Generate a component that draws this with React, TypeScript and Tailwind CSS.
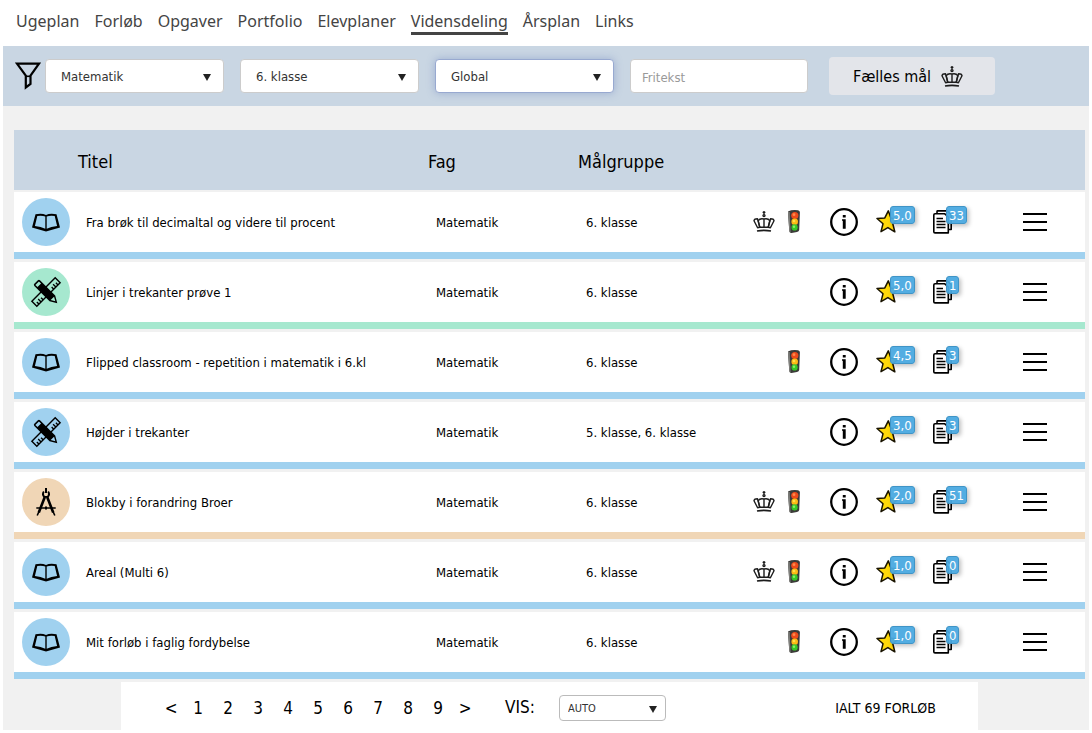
import { ReactNode } from 'react';

type Kind = 'book' | 'tools' | 'compass';
type Tone = 'blue' | 'green' | 'sand';

interface Course {
  title: string;
  subject: string;
  target: string;
  kind: Kind;
  tone: Tone;
  crown: boolean;
  light: boolean;
  rating: string;
  copies: number;
}

const courses: Course[] = [
  { title: 'Fra brøk til decimaltal og videre til procent', subject: 'Matematik', target: '6. klasse', kind: 'book', tone: 'blue', crown: true, light: true, rating: '5,0', copies: 33 },
  { title: 'Linjer i trekanter prøve 1', subject: 'Matematik', target: '6. klasse', kind: 'tools', tone: 'green', crown: false, light: false, rating: '5,0', copies: 1 },
  { title: 'Flipped classroom - repetition i matematik i 6.kl', subject: 'Matematik', target: '6. klasse', kind: 'book', tone: 'blue', crown: false, light: true, rating: '4,5', copies: 3 },
  { title: 'Højder i trekanter', subject: 'Matematik', target: '5. klasse, 6. klasse', kind: 'tools', tone: 'blue', crown: false, light: false, rating: '3,0', copies: 3 },
  { title: 'Blokby i forandring Broer', subject: 'Matematik', target: '6. klasse', kind: 'compass', tone: 'sand', crown: true, light: true, rating: '2,0', copies: 51 },
  { title: 'Areal (Multi 6)', subject: 'Matematik', target: '6. klasse', kind: 'book', tone: 'blue', crown: true, light: true, rating: '1,0', copies: 0 },
  { title: 'Mit forløb i faglig fordybelse', subject: 'Matematik', target: '6. klasse', kind: 'book', tone: 'blue', crown: false, light: true, rating: '1,0', copies: 0 },
];

const navItems = ['Ugeplan', 'Forløb', 'Opgaver', 'Portfolio', 'Elevplaner', 'Vidensdeling', 'Årsplan', 'Links'];

const discTone: Record<Tone, string> = {
  blue: 'bg-[#a0d1ef]',
  green: 'bg-[#a6e8cf]',
  sand: 'bg-[#f0d6b6]',
};

const lineTone: Record<Tone, string> = {
  blue: 'border-b-[#a0d1ef]',
  green: 'border-b-[#a6e8cf]',
  sand: 'border-b-[#f0d6b6]',
};

function FunnelIcon() {
  return (
    <svg viewBox="0 0 26 28" className="h-7 w-[26px] shrink-0" fill="none" stroke="#000" strokeWidth="2.2" aria-hidden="true">
      <path d="M2 1.600H24L15.500 13.500V22L10.800 25.500V13.500Z" />
      <path d="M10.800 14.300H15.500" strokeWidth="1.600" />
    </svg>
  );
}

function CrownIcon() {
  return (
    <svg viewBox="0 0 22 24" className="h-6 w-[22px]" fill="none" stroke="#1c1c1c" strokeWidth="1.4" strokeLinejoin="round" aria-hidden="true">
      <path d="M11 1V4.500M9.600 2.400H12.400" />
      <circle cx="11" cy="5.600" r="1" />
      <path d="M4.600 17.700L1 10.700Q1.300 8.800 4.500 8.800L6.800 17.300Z" />
      <path d="M17.400 17.700L21 10.700Q20.700 8.800 17.500 8.800L15.200 17.300Z" />
      <path d="M5.200 10.600Q7 8 11 9Q15 8 16.800 10.600L15.200 17.300H6.800ZM11 9V17" />
      <path d="M4 21Q11 19.600 18 21" strokeWidth="1.700" />
    </svg>
  );
}

function TrafficLightIcon() {
  return (
    <svg viewBox="0 0 14 24" className="h-6 w-[14px]" aria-hidden="true">
      <path d="M1 1.500Q5 -.5 11 .3Q13 .6 12.900 2.500L12.200 20Q12 21.500 10 21.900L4.500 22.900Q2.500 23 2.300 21L1 3Z" fill="#3b3a38" />
      <path d="M1 2L2.300 21.500L3.600 22.600L2.700 2Z" fill="#80807c" />
      <circle cx="7.800" cy="5.500" r="3.600" fill="#ee4a1a" />
      <circle cx="7.700" cy="11.700" r="3.300" fill="#fdb813" />
      <circle cx="7.600" cy="17.400" r="3.100" fill="#35c828" />
      <circle cx="7" cy="4.700" r="1.400" fill="#ff8a4c" />
      <circle cx="7" cy="11" r="1.300" fill="#ffe04a" />
      <circle cx="7" cy="16.800" r="1.200" fill="#8dec6a" />
    </svg>
  );
}

function InfoIcon() {
  return (
    <svg viewBox="0 0 28 28" className="h-7 w-7" aria-hidden="true">
      <circle cx="14" cy="14" r="12.800" fill="none" stroke="#000" strokeWidth="2.300" />
      <path d="M12.800 7H15.700V9.500H12.800ZM12 11.300H15.700V20.700H12.800V12.800H12Z" fill="#000" />
    </svg>
  );
}

function StarIcon() {
  return (
    <svg viewBox="0 0 24 24" className="h-6 w-6" aria-hidden="true">
      <path d="M12.300 .8L15 8.200L22.800 8.500L16.800 13.800L18.800 21.800L11.900 17.600L5 21.600L7 13.800L1 8.500L8.800 7.900Z" fill="#ffd90a" stroke="#1a1400" strokeWidth="1.500" strokeLinejoin="round" />
    </svg>
  );
}

function DocsIcon() {
  return (
    <svg viewBox="0 0 22 24" className="h-6 w-[22px]" fill="#fff" stroke="#000" strokeWidth="1.600" strokeLinejoin="round" aria-hidden="true">
      <path d="M5 3.500V1.500Q5 .9 5.800 .9H15L19.200 4.500V19.500H16" />
      <path d="M3 3.700H12.500L16.300 7V22.900H3Q1.800 22.900 1.800 21.700V4.900Q1.800 3.700 3 3.700Z" />
      <path d="M4.500 8.500H11M4.500 11.500H13.500M4.500 14.500H13.500M4.500 17.500H13.500" strokeWidth="1.300" />
    </svg>
  );
}

function MenuIcon() {
  return (
    <svg viewBox="0 0 24 20" className="h-5 w-6" fill="#000" aria-hidden="true">
      <path d="M0 1H24V3H0ZM0 9H24V11H0ZM0 17H24V19H0Z" />
    </svg>
  );
}

function KindIcon({ kind }: { kind: Kind }) {
  return (
    <svg viewBox="0 0 48 48" className="h-12 w-12" aria-hidden="true">
      {kind === 'book' && (
        <path
          fillRule="evenodd"
          d="M13.500 16.300Q20 15 24 17Q28 15 34.500 16.300L38 29.500L24 33.400L10 29.500ZM15.300 18L12.900 27.900Q19 28.200 23.300 30.800V18.600Q20 17.200 15.300 18ZM32.700 18Q28 17.200 24.700 18.600V30.800Q29 28.200 35.100 27.900Z"
        />
      )}
      {kind === 'tools' && (
        <g>
          <g transform="rotate(-45 24 24)" fill="none" stroke="#000" strokeWidth="1.400">
            <path d="M7.500 20.500H40.500V27.500H7.500Z" />
            <path d="M10.500 27.500V24.500M13.500 27.500V23.500M16.500 27.500V24.500M31.500 27.500V24.500M34.500 27.500V23.500M37.500 27.500V24.500" />
          </g>
          <g transform="rotate(45 24 24)">
            <path
              fillRule="evenodd"
              d="M11.500 20H33L40 24L33 28H11.500Q10 28 10 26.500V21.500Q10 20 11.500 20ZM11.500 21.500V26.500H14.500V21.500ZM33 21.600V26.400L37.200 24Z"
            />
          </g>
        </g>
      )}
      {kind === 'compass' && (
        <g fill="none" stroke="#000">
          <path d="M24 10V15" strokeWidth="2" />
          <path d="M21.800 13.500Q19.800 16.500 22.200 18.800H25.800Q28.200 16.500 26.200 13.500" strokeWidth="1.800" />
          <path d="M22.800 19L16.800 34.500M25.200 19L31.200 34.500" strokeWidth="2.600" />
          <path d="M17.200 33L15.200 37.500M30.800 33L32.800 37.500" strokeWidth="1.600" />
          <path d="M14.300 30H33.700" strokeWidth="1.500" />
          <path d="M24 28.500V31.500" strokeWidth="2" />
        </g>
      )}
    </svg>
  );
}

function Caret() {
  return (
    <svg viewBox="0 0 8 7" className="mt-0.5 h-[7px] w-2" fill="#222" aria-hidden="true">
      <path d="M0 0H8L4 7Z" />
    </svg>
  );
}

function FilterSelect({ label, value, active }: { label: string; value: string; active?: boolean }) {
  return (
    <div className="relative flex w-[179px] items-center">
      <select
        aria-label={label}
        defaultValue={value}
        className={
          active
            ? 'h-[34px] w-full appearance-none rounded border border-[#98a9d0] bg-white pt-0.5 pr-6 pl-[15px] text-[13px] text-[#333] shadow-[0_0_8px_rgba(90,115,180,0.4)] outline-none'
            : 'h-[34px] w-full appearance-none rounded border border-[#ccc] bg-white pt-0.5 pr-6 pl-[15px] text-[13px] text-[#333] outline-none'
        }
      >
        <option>{value}</option>
      </select>
      <span className="pointer-events-none absolute right-[13px]">
        <Caret />
      </span>
    </div>
  );
}

function Badge({ children }: { children: ReactNode }) {
  return (
    <span className="absolute -top-1 left-[14px] flex h-[18px] items-center rounded-[3px] border border-[#3f94c6] bg-[#4aa9e0]/95 px-[2px] text-[13px] leading-none text-white shadow-[2px_2px_4px_rgba(0,0,0,0.25)]">
      {children}
    </span>
  );
}

function CourseRow({ course }: { course: Course }) {
  const line = lineTone[course.tone];
  const cell = `border-t-[3px] border-b-[7px] border-t-[#f1f1f1] bg-white p-0 group-first:border-t-2 ${line}`;
  return (
    <tr className="group">
      <td className={cell}>
        <div className="py-1.5 pl-2">
          <span className={`block size-12 rounded-full ${discTone[course.tone]}`}>
            <KindIcon kind={course.kind} />
          </span>
        </div>
      </td>
      <td className={cell}>
        <div className="px-2 pt-0.5">{course.title}</div>
      </td>
      <td className={cell}>
        <div className="px-2 pt-0.5">{course.subject}</div>
      </td>
      <td className={cell}>
        <div className="px-2 pt-0.5">{course.target}</div>
      </td>
      <td className={cell}>
        <div className="flex items-center">
          <span className="flex w-6 justify-center">{course.crown && <CrownIcon />}</span>
          <span className="flex w-9 justify-center">{course.light && <TrafficLightIcon />}</span>
          <button type="button" aria-label="Info" className="ml-2 flex w-12 justify-center">
            <InfoIcon />
          </button>
          <span className="w-[60px] pl-2">
            <button type="button" aria-label="Bedømmelse" className="relative block">
              <StarIcon />
              <Badge>{course.rating}</Badge>
            </button>
          </span>
          <span className="w-[60px] pl-1">
            <button type="button" aria-label="Kopier" className="relative block">
              <DocsIcon />
              <Badge>{course.copies}</Badge>
            </button>
          </span>
          <button type="button" aria-label="Menu" className="mr-[26px] ml-auto flex w-12 justify-center">
            <MenuIcon />
          </button>
        </div>
      </td>
    </tr>
  );
}

export default function App() {
  return (
    <div className="bg-white px-[3px] pb-[3px] font-['DejaVu_Sans_Condensed','Noto_Sans',sans-serif] text-[13px] text-black">
      <nav className="flex h-[46px] items-start gap-[15px] pt-[11px] pl-[13px] font-['Noto_Sans',sans-serif] text-[16px] text-[#444]">
        {navItems.map((item) => (
          <a
            key={item}
            href="#"
            className={item === 'Vidensdeling' ? 'border-b-3 border-[#444] leading-[21px]' : 'leading-[21px]'}
          >
            {item}
          </a>
        ))}
      </nav>

      <form className="flex h-[60px] items-center bg-[#c9d6e3] pl-3">
        <FunnelIcon />
        <div className="ml-1 flex items-center gap-4">
          <FilterSelect label="Fag" value="Matematik" />
          <FilterSelect label="Klasse" value="6. klasse" />
          <FilterSelect label="Område" value="Global" active />
          <input
            type="text"
            aria-label="Fritekst"
            placeholder="Fritekst"
            className="h-[34px] w-[178px] rounded border border-[#ccc] bg-white px-[11px] pt-0.5 text-[13px] placeholder:text-[#999]"
          />
        </div>
        <button type="button" className="ml-[21px] flex h-[38px] w-[166px] items-center justify-center gap-2.5 rounded bg-[#e3e5ea] pt-0.5 pr-2 text-[16px]">
          Fælles mål
          <CrownIcon />
        </button>
      </form>

      <main className="bg-[#f1f1f1] pt-6 pr-1 pl-[11px]">
        <table className="w-full table-fixed border-separate border-spacing-0 text-left">
          <colgroup>
            <col className="w-16" />
            <col />
            <col className="w-[150px]" />
            <col className="w-[174px]" />
            <col className="w-[333px]" />
          </colgroup>
          <thead className="bg-[#c9d6e3] text-[18px]">
            <tr className="h-[60px]">
              <td className="p-0" />
              <th className="p-0 pt-0.5 font-normal">Titel</th>
              <th className="p-0 pt-0.5 font-normal">Fag</th>
              <th className="p-0 pt-0.5 font-normal">Målgruppe</th>
              <td className="p-0" />
            </tr>
          </thead>
          <tbody>
            {courses.map((course) => (
              <CourseRow key={course.title} course={course} />
            ))}
          </tbody>
        </table>

        <footer className="mx-auto mt-[3px] flex h-12 w-4/5 items-center bg-white pt-1 pr-[42px] pl-[38px] text-[17px]">
          <nav aria-label="Sider" className="flex">
            {['<', '1', '2', '3', '4', '5', '6', '7', '8', '9', '>'].map((label) => (
              <a key={label} href="#" className={label === '<' || label === '>' ? 'w-6 text-center leading-6' : 'w-[30px] text-center leading-6'}>
                {label}
              </a>
            ))}
          </nav>
          <label htmlFor="page-size" className="ml-7">
            VIS:
          </label>
          <div className="relative ml-6 flex w-[107px] items-center">
            <select id="page-size" defaultValue="AUTO" className="h-[26px] w-full appearance-none rounded border border-[#bbb] bg-white pt-0.5 pr-6 pl-2 text-[11px] text-[#333]">
              <option>AUTO</option>
            </select>
            <span className="pointer-events-none absolute right-[9px]">
              <Caret />
            </span>
          </div>
          <span className="ml-auto text-[14px]">IALT 69 FORLØB</span>
        </footer>
      </main>
    </div>
  );
}
